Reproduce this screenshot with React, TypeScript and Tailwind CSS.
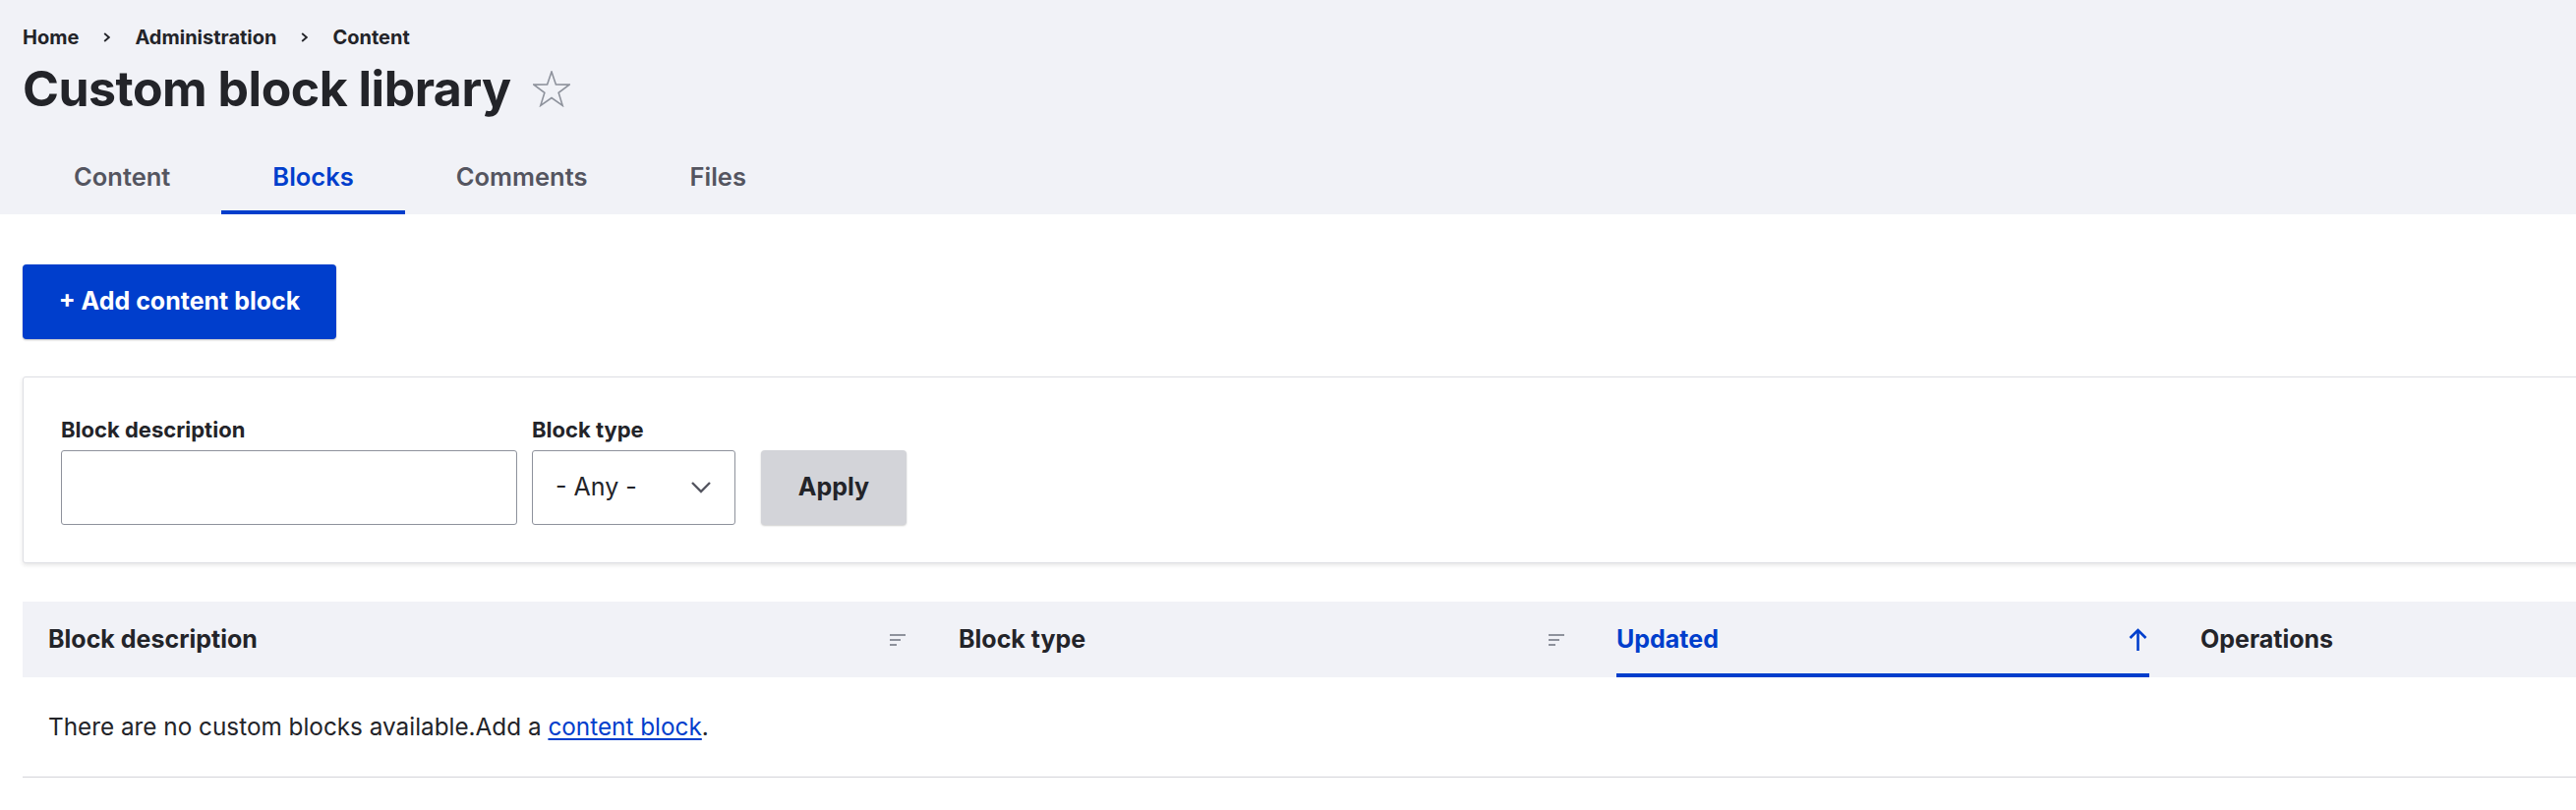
import React from "react";

function Star() {
  return (
    <svg width="38" height="37" viewBox="0 0 38 37" className="ml-[22px] mt-[1px]">
      <polygon
        points="19,1 23.41,13.93 37.07,14.13 26.13,22.32 30.17,35.37 19,27.5 7.83,35.37 11.87,22.32 0.93,14.13 14.59,13.93"
        fill="none"
        stroke="#8e929c"
        strokeWidth="1.6"
        strokeLinejoin="miter"
      />
    </svg>
  );
}

function Sep() {
  return (
    <svg width="7" height="10" viewBox="0 0 7 10" className="mx-[25px]">
      <polyline points="1.2,1 5.8,5 1.2,9" fill="none" stroke="#232429" strokeWidth="1.8" />
    </svg>
  );
}

function SortIcon() {
  return (
    <svg width="16" height="12" viewBox="0 0 16 12">
      <line x1="0" y1="1" x2="16" y2="1" stroke="#8e929c" strokeWidth="2" />
      <line x1="0" y1="6" x2="11" y2="6" stroke="#8e929c" strokeWidth="2" />
      <line x1="0" y1="11" x2="7" y2="11" stroke="#8e929c" strokeWidth="2" />
    </svg>
  );
}

function ArrowUp() {
  return (
    <svg width="19" height="23" viewBox="0 0 19 23">
      <line x1="9.5" y1="2.5" x2="9.5" y2="23" stroke="#003ecc" strokeWidth="2.6" />
      <polyline points="1.5,10 9.5,2 17.5,10" fill="none" stroke="#003ecc" strokeWidth="2.6" />
    </svg>
  );
}

function Chevron() {
  return (
    <svg width="20" height="12" viewBox="0 0 20 12">
      <polyline points="1,1 10,10 19,1" fill="none" stroke="#545560" strokeWidth="2.4" />
    </svg>
  );
}

export default function App() {
  return (
    <div className="min-h-screen w-full overflow-hidden bg-white font-['Inter',sans-serif] text-[#232429]">
      <header className="bg-[#f1f2f7] pl-[23px]">
        <nav className="pt-[23px] flex items-center text-[20px] leading-[30px] font-bold">
          <a>Home</a>
          <Sep />
          <a>Administration</a>
          <Sep />
          <a>Content</a>
        </nav>
        <div className="mt-[7px] flex items-center">
          <h1 className="text-[50px] leading-[60px] font-bold tracking-[-0.5px]">Custom block library</h1>
          <Star />
        </div>
        <div className="mt-[25px] flex text-[25.5px] leading-[30px] font-semibold">
          <a className="px-[52px] pt-[20px] pb-[19px] border-b-4 border-transparent text-[#545560]">Content</a>
          <a className="px-[52px] pt-[20px] pb-[19px] border-b-4 border-[#003ecc] text-[#003ecc]">Blocks</a>
          <a className="px-[52px] pt-[20px] pb-[19px] border-b-4 border-transparent text-[#545560]">Comments</a>
          <a className="px-[52px] pt-[20px] pb-[19px] border-b-4 border-transparent text-[#545560]">Files</a>
        </div>
      </header>

      <main className="pl-[23px]">
        <div className="pt-[51px] flex">
          <button className="h-[76px] w-[319px] flex items-center justify-center rounded-[4px] bg-[#003ecc] text-white text-[25px] font-bold shadow-[0_1px_2px_rgba(0,0,0,0.25)]">
            + Add content block
          </button>
        </div>

        <div className="mt-[38px] -mr-[10px] flex items-end border border-[#dedfe4] rounded-[3px] bg-white shadow-[0_2px_4px_rgba(0,0,0,0.1)] px-[38px] py-[38px]">
          <div className="flex flex-col">
            <label className="text-[22px] leading-[30px] font-bold mb-[6px]">Block description</label>
            <div className="h-[76px] w-[464px] border border-[#8e929c] rounded-[3px] bg-white" />
          </div>
          <div className="flex flex-col ml-[15px]">
            <label className="text-[22px] leading-[30px] font-bold mb-[6px]">Block type</label>
            <div className="h-[76px] w-[207px] border border-[#8e929c] rounded-[3px] bg-white flex items-center justify-between pl-[23px] pr-[24px]">
              <span className="text-[25px] font-normal">- Any -</span>
              <Chevron />
            </div>
          </div>
          <button className="ml-[26px] h-[76px] w-[148px] rounded-[4px] bg-[#d3d4d9] text-[25px] font-bold text-[#232429] shadow-[0_1px_2px_rgba(0,0,0,0.2)]">
            Apply
          </button>
        </div>

        <div className="mt-[39px]">
          <div className="grid grid-cols-[925px_670px_594px_1fr] h-[77px] bg-[#f1f2f7] text-[25px] font-bold">
            <div className="flex items-center justify-between px-[27px] pl-[26px]">
              <span>Block description</span>
              <SortIcon />
            </div>
            <div className="flex items-center justify-between px-[27px]">
              <span>Block type</span>
              <SortIcon />
            </div>
            <div className="px-[26px]">
              <div className="h-full flex items-center justify-between border-y-4 border-t-transparent border-b-[#003ecc] text-[#003ecc]">
                <span>Updated</span>
                <span className="mr-[2px]"><ArrowUp /></span>
              </div>
            </div>
            <div className="flex items-center px-[26px]">
              <span>Operations</span>
            </div>
          </div>
          <div className="h-[102px] flex items-center px-[26px] border-b border-[#d3d4d9] text-[24.3px]">
            <span>
              There are no custom blocks available.Add a{" "}
              <a className="text-[#003ecc] underline underline-offset-[3px]">content block</a>.
            </span>
          </div>
        </div>
      </main>
    </div>
  );
}
